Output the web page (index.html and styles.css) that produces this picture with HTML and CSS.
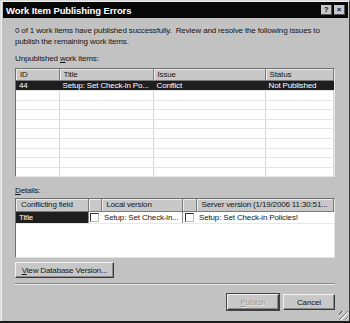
FILE: index.html
```html
<!DOCTYPE html>
<html lang="en">
<head>
    <meta charset="UTF-8">
    <title>Work Item Publishing Errors</title>
    <link rel="stylesheet" href="styles.css">
</head>
<body>
    <div class="window">
        <div class="titlebar">
            <span class="title">Work Item Publishing Errors</span>
            <div class="caption-buttons">
                <span class="cap-btn">?</span>
                <span class="cap-btn">&#215;</span>
            </div>
        </div>

        <div class="content">
            <p class="intro">0 of 1 work items have published successfully.&nbsp; Review and resolve the following issues to publish the remaining work items.</p>

            <div class="label">Unpublished <u>w</u>ork items:</div>
            <div class="grid">
                <table class="items">
                    <colgroup>
                        <col style="width: 43px">
                        <col style="width: 94px">
                        <col style="width: 112px">
                        <col>
                    </colgroup>
                    <thead>
                        <tr><th>ID</th><th>Title</th><th>Issue</th><th>Status</th></tr>
                    </thead>
                    <tbody>
                        <tr class="selected"><td>44</td><td>Setup: Set Check-in Po...</td><td>Conflict</td><td>Not Published</td></tr>
                        <tr><td></td><td></td><td></td><td></td></tr>
                        <tr><td></td><td></td><td></td><td></td></tr>
                        <tr><td></td><td></td><td></td><td></td></tr>
                        <tr><td></td><td></td><td></td><td></td></tr>
                        <tr><td></td><td></td><td></td><td></td></tr>
                        <tr><td></td><td></td><td></td><td></td></tr>
                        <tr><td></td><td></td><td></td><td></td></tr>
                        <tr><td></td><td></td><td></td><td></td></tr>
                        <tr><td></td><td></td><td></td><td></td></tr>
                    </tbody>
                </table>
            </div>

            <div class="label details-label"><u>D</u>etails:</div>
            <div class="grid details">
                <table class="conflicts">
                    <colgroup>
                        <col style="width: 72px">
                        <col style="width: 13px">
                        <col style="width: 81px">
                        <col style="width: 14px">
                        <col>
                    </colgroup>
                    <thead>
                        <tr><th>Conflicting field</th><th></th><th>Local version</th><th></th><th>Server version (1/19/2006 11:30:51...</th></tr>
                    </thead>
                    <tbody>
                        <tr>
                            <td class="field">Title</td>
                            <td class="check-cell"><span class="checkbox"></span></td>
                            <td>Setup: Set Check-in...</td>
                            <td class="check-cell"><span class="checkbox"></span></td>
                            <td>Setup: Set Check-in Policies!</td>
                        </tr>
                    </tbody>
                </table>
            </div>

            <button class="btn view-btn" type="button"><u>V</u>iew Database Version...</button>

            <div class="separator"></div>

            <div class="actions">
                <button class="btn disabled" type="button"><u>P</u>ublish</button>
                <button class="btn" type="button">Cancel</button>
            </div>
        </div>
        <div class="grip"></div>
    </div>
</body>
</html>
```

FILE: styles.css
```css
body {
    margin: 0;
    padding: 0;
    background-color: #1a1a1a;
    font-family: "Liberation Sans", Arial, sans-serif;
    font-size: 8px;
    letter-spacing: -0.15px;
    color: #151515;
}
.window {
    position: relative;
    width: 348px;
    height: 320px;
    background-color: #c2c2c2;
    border-top: 1px solid #d8d8d8;
    border-left: 1px solid #dcdcdc;
    border-right: 1px solid #3a3a3a;
    box-shadow: inset 1px 1px 0 #efefef;
}
.titlebar {
    display: flex;
    align-items: center;
    justify-content: space-between;
    height: 16px;
    margin: 1px 1px 0 2px;
    padding: 0 3px 0 3px;
    background-color: #080808;
}
.title {
    color: #fff;
    font-weight: bold;
    font-size: 9.5px;
    letter-spacing: -0.1px;
}
.caption-buttons {
    display: flex;
    gap: 2px;
}
.cap-btn {
    display: flex;
    align-items: center;
    justify-content: center;
    width: 10px;
    height: 9px;
    background-color: #c8c8c8;
    color: #111;
    font-weight: bold;
    font-size: 8px;
    line-height: 9px;
    border-right: 1px solid #555;
    border-bottom: 1px solid #555;
}
.content {
    padding: 0 14px 0 14px;
}
.intro {
    margin: 7px 0 0 0;
    line-height: 11px;
}
.label {
    margin-top: 7px;
    line-height: 10px;
}
.grid {
    margin-top: 4px;
    height: 107px;
    background-color: #fff;
    border-top: 1px solid #6e6e6e;
    border-left: 1px solid #6e6e6e;
    border-right: 1px solid #e6e6e6;
    border-bottom: 1px solid #e6e6e6;
    overflow: hidden;
}
table {
    width: 100%;
    border-collapse: collapse;
    table-layout: fixed;
}
th {
    height: 11px;
    padding: 0 0 0 4px;
    background-color: #c8c8c8;
    font-weight: normal;
    text-align: left;
    border-right: 1px solid #7a7a7a;
    border-bottom: 1px solid #7a7a7a;
    box-shadow: inset 1px 1px 0 #ececec;
    white-space: nowrap;
    overflow: hidden;
    line-height: 10px;
}
.items td {
    height: 8.6px;
    padding: 0 0 0 3px;
    border-right: 1px solid #d8d8d8;
    border-bottom: 1px solid #e4e4e4;
    white-space: nowrap;
    overflow: hidden;
    line-height: 8px;
}
.items tr.selected td {
    height: 9px;
    background-color: #1e1e1e;
    color: #fff;
    border-right-color: #1e1e1e;
}
.details-label {
    margin-top: 9px;
}
.details {
    margin-top: 2px;
    height: 58px;
}
.conflicts th {
    height: 12px;
    padding-left: 5px;
}
.conflicts td {
    height: 11px;
    padding: 0 0 0 3px;
    white-space: nowrap;
    overflow: hidden;
    border-bottom: 1px solid #e8e8e8;
    line-height: 10px;
}
.conflicts td.field {
    background-color: #1e1e1e;
    color: #fff;
}
.conflicts td.check-cell {
    padding: 0;
    text-align: center;
    border-left: 1px solid #888;
}
.checkbox {
    display: inline-block;
    width: 7px;
    height: 7px;
    margin-top: 1px;
    background-color: #fff;
    border-top: 1px solid #333;
    border-left: 1px solid #333;
    border-right: 1px solid #bbb;
    border-bottom: 1px solid #bbb;
    vertical-align: middle;
}
.btn {
    height: 16px;
    padding: 0;
    font-family: "Liberation Sans", Arial, sans-serif;
    font-size: 8px;
    letter-spacing: -0.15px;
    color: #151515;
    background-color: #c8c8c8;
    border-top: 1px solid #f2f2f2;
    border-left: 1px solid #f2f2f2;
    border-right: 1px solid #3a3a3a;
    border-bottom: 1px solid #3a3a3a;
    box-shadow: inset -1px -1px 0 #8a8a8a;
}
.view-btn {
    display: block;
    width: 99px;
    margin-top: 4px;
}
.separator {
    margin-top: 5px;
    height: 0;
    border-top: 1px solid #8a8a8a;
    border-bottom: 1px solid #ececec;
}
.actions {
    display: flex;
    justify-content: flex-end;
    gap: 4px;
    margin-top: 9px;
}
.actions .btn {
    width: 52px;
}
.btn.disabled {
    color: #9a9a9a;
    text-shadow: 1px 1px 0 #ececec;
    outline: 1px solid #444;
}
.grip {
    position: absolute;
    right: 1px;
    bottom: 1px;
    width: 9px;
    height: 9px;
    background: repeating-linear-gradient(135deg, transparent 0 2px, #777 2px 3px, #eee 3px 4px);
}
```
